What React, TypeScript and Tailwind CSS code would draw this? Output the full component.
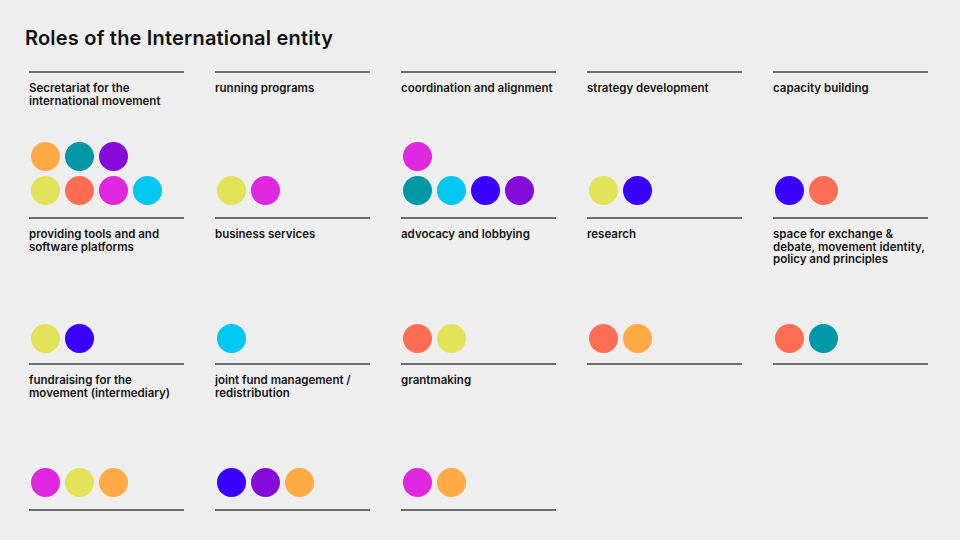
const C = {
  orange: 'bg-[#ffaa44]',
  teal: 'bg-[#0098a6]',
  purple: 'bg-[#840bd8]',
  yellow: 'bg-[#e2e358]',
  coral: 'bg-[#ff6d55]',
  magenta: 'bg-[#de27de]',
  cyan: 'bg-[#00c8f0]',
  blue: 'bg-[#3a00ff]',
};

type Cell = { dots?: string[][]; label?: string[]; empty?: boolean };

const rows: { cells: Cell[]; dotsPb: string; top?: boolean }[] = [
  {
    top: true,
    dotsPb: 'pb-0',
    cells: [
      { label: ['Secretariat for the', 'international movement'] },
      { label: ['running programs'] },
      { label: ['coordination and alignment'] },
      { label: ['strategy development'] },
      { label: ['capacity building'] },
    ],
  },
  {
    dotsPb: 'pb-[12px]',
    cells: [
      { dots: [[C.orange, C.teal, C.purple], [C.yellow, C.coral, C.magenta, C.cyan]], label: ['providing tools and and', 'software platforms'] },
      { dots: [[C.yellow, C.magenta]], label: ['business services'] },
      { dots: [[C.magenta], [C.teal, C.cyan, C.blue, C.purple]], label: ['advocacy and lobbying'] },
      { dots: [[C.yellow, C.blue]], label: ['research'] },
      { dots: [[C.blue, C.coral]], label: ['space for exchange &', 'debate, movement identity,', 'policy and principles'] },
    ],
  },
  {
    dotsPb: 'pb-[10px]',
    cells: [
      { dots: [[C.yellow, C.blue]], label: ['fundraising for the', 'movement (intermediary)'] },
      { dots: [[C.cyan]], label: ['joint fund management /', 'redistribution'] },
      { dots: [[C.coral, C.yellow]], label: ['grantmaking'] },
      { dots: [[C.coral, C.orange]] },
      { dots: [[C.coral, C.teal]] },
    ],
  },
  {
    dotsPb: 'pb-[12px]',
    cells: [
      { dots: [[C.magenta, C.yellow, C.orange]] },
      { dots: [[C.blue, C.purple, C.orange]] },
      { dots: [[C.magenta, C.orange]] },
      { empty: true },
      { empty: true },
    ],
  },
];

const RoleCell = ({ cell, top, dotsPb }: { cell: Cell; top?: boolean; dotsPb: string }) => {
  if (cell.empty) return <div />;
  return (
    <div className="flex flex-col">
      {!top && (
        <div className={`h-[81px] flex flex-col justify-end gap-[5px] ${dotsPb}`}>
          {(cell.dots ?? []).map((row, i) => (
            <div key={i} className="flex gap-[5px] pl-[2px]">
              {row.map((c, j) => (
                <div key={j} className={`w-[29px] h-[29px] rounded-full ${c}`} />
              ))}
            </div>
          ))}
        </div>
      )}
      <div className="h-[2px] bg-[#6e6e6e]" />
      <div className="mt-[9px] h-[54px] text-[11.5px] leading-[12.5px] font-semibold text-[#161616] whitespace-nowrap">
        {(cell.label ?? []).map((l, i) => (
          <div key={i}>{l}</div>
        ))}
      </div>
    </div>
  );
}

export default function App() {
  return (
    <div className="w-[960px] h-[540px] bg-[#eeeeee] overflow-hidden" style={{ fontFamily: 'Inter, "Noto Sans", sans-serif' }}>
      <h1 className="pt-[26px] pl-[25px] text-[20px] leading-[24px] font-semibold tracking-[0.2px] text-[#111111]">
        Roles of the International entity
      </h1>
      <div className="mt-[21px] pl-[29px] flex flex-col">
        {rows.map((r, ri) => (
          <div key={ri} className="grid grid-cols-[repeat(5,155px)] gap-x-[31px]">
            {r.cells.map((c, ci) => (
              <RoleCell key={ci} cell={c} top={r.top} dotsPb={r.dotsPb} />
            ))}
          </div>
        ))}
      </div>
    </div>
  );
}
